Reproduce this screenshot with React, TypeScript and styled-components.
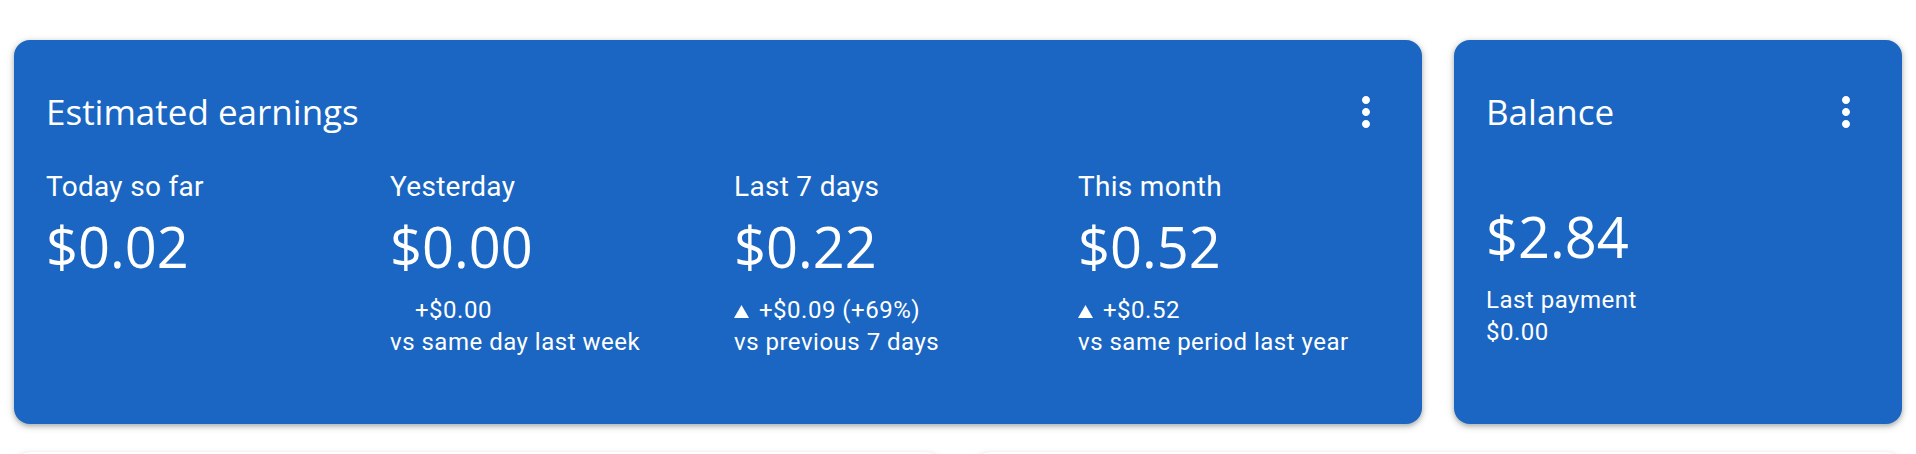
import React from "react";
import styled, { createGlobalStyle } from "styled-components";

const GlobalStyle = createGlobalStyle`
  body {
    margin: 0;
    background: #ffffff;
    font-family: Roboto, "Liberation Sans", sans-serif;
    overflow: hidden;
  }
`;

const Page = styled.main`
  display: flex;
  flex-direction: column;
  gap: 28px;
  padding: 40px 14px 0;
`;

const Row = styled.div<{ $height: number }>`
  display: flex;
  gap: 32px;
  height: ${({ $height }) => $height}px;
`;

const Card = styled.section<{ $width?: number }>`
  box-sizing: border-box;
  flex: ${({ $width }) => ($width ? `0 0 ${$width}px` : "1 1 0")};
  min-width: 0;
  padding: 48px 32px 0;
  border-radius: 16px;
  background: #1a66c2;
  color: #ffffff;
  box-shadow: 0 2px 4px rgba(60, 64, 67, 0.3), 0 2px 6px 2px rgba(60, 64, 67, 0.15);
`;

const BlankCard = styled.div`
  flex: 1 1 0;
  border-radius: 16px;
  background: #ffffff;
  box-shadow: 0 1px 3px rgba(60, 64, 67, 0.2), 0 2px 6px 2px rgba(60, 64, 67, 0.08);
`;

const Header = styled.header`
  display: flex;
  align-items: center;
  justify-content: space-between;
  height: 48px;
`;

const Title = styled.h2`
  margin: 0;
  font-family: "Open Sans", sans-serif;
  font-size: 35px;
  font-weight: 400;
  line-height: 48px;
`;

const MenuButton = styled.button`
  display: flex;
  align-items: center;
  justify-content: center;
  flex: 0 0 48px;
  width: 48px;
  height: 48px;
  padding: 0;
  border: none;
  background: none;
  color: #ffffff;
  cursor: pointer;
`;

const Metrics = styled.div`
  display: grid;
  grid-template-columns: repeat(4, 344px);
  margin-top: 31px;
`;

const Metric = styled.div`
  display: flex;
  flex-direction: column;
`;

const Label = styled.div`
  font-size: 28px;
  line-height: 40px;
  letter-spacing: 0.3px;
`;

const Amount = styled.div<{ $gap: number }>`
  margin-top: ${({ $gap }) => $gap}px;
  font-family: "Open Sans", sans-serif;
  font-size: 56px;
  line-height: 64px;
`;

const Change = styled.div`
  display: flex;
  align-items: baseline;
  margin-top: 16px;
  font-size: 24px;
  line-height: 32px;
  letter-spacing: 0.5px;
`;

const Arrow = styled.svg<{ $hidden?: boolean }>`
  width: 15px;
  height: 13px;
  margin-right: 10px;
  visibility: ${({ $hidden }) => ($hidden ? "hidden" : "visible")};
`;

const Note = styled.div<{ $gap?: number }>`
  margin-top: ${({ $gap }) => $gap ?? 0}px;
  font-size: 24px;
  line-height: 32px;
  letter-spacing: 0.5px;
`;

const MoreIcon = () => (
  <svg width="48" height="48" viewBox="0 0 24 24" fill="currentColor">
    <path d="M12 8c1.1 0 2-.9 2-2s-.9-2-2-2-2 .9-2 2 .9 2 2 2zm0 2c-1.1 0-2 .9-2 2s.9 2 2 2 2-.9 2-2-.9-2-2-2zm0 6c-1.1 0-2 .9-2 2s.9 2 2 2 2-.9 2-2-.9-2-2-2z" />
  </svg>
);

type MetricData = {
  label: string;
  amount: string;
  change?: string;
  up?: boolean;
  compare?: string;
};

const metrics: MetricData[] = [
  { label: "Today so far", amount: "$0.02" },
  { label: "Yesterday", amount: "$0.00", change: "+$0.00", up: false, compare: "vs same day last week" },
  { label: "Last 7 days", amount: "$0.22", change: "+$0.09 (+69%)", up: true, compare: "vs previous 7 days" },
  { label: "This month", amount: "$0.52", change: "+$0.52", up: true, compare: "vs same period last year" },
];

const App = () => {
  return (
    <>
      <GlobalStyle />
      <Page>
        <Row $height={384}>
          <Card>
            <Header>
              <Title>Estimated earnings</Title>
              <MenuButton type="button" aria-label="More options">
                <MoreIcon />
              </MenuButton>
            </Header>
            <Metrics>
              {metrics.map((m) => (
                <Metric key={m.label}>
                  <Label>{m.label}</Label>
                  <Amount $gap={7}>{m.amount}</Amount>
                  {m.change && (
                    <>
                      <Change>
                        <Arrow $hidden={!m.up} viewBox="0 0 15 13" fill="currentColor">
                          <polygon points="7.5,0 15,13 0,13" />
                        </Arrow>
                        {m.change}
                      </Change>
                      <Note>{m.compare}</Note>
                    </>
                  )}
                </Metric>
              ))}
            </Metrics>
          </Card>
          <Card $width={448}>
            <Header>
              <Title>Balance</Title>
              <MenuButton type="button" aria-label="More options">
                <MoreIcon />
              </MenuButton>
            </Header>
            <Amount $gap={68}>$2.84</Amount>
            <Note $gap={16}>Last payment</Note>
            <Note>$0.00</Note>
          </Card>
        </Row>
        <Row $height={200}>
          <BlankCard />
          <BlankCard />
        </Row>
      </Page>
    </>
  );
};

export default App;
